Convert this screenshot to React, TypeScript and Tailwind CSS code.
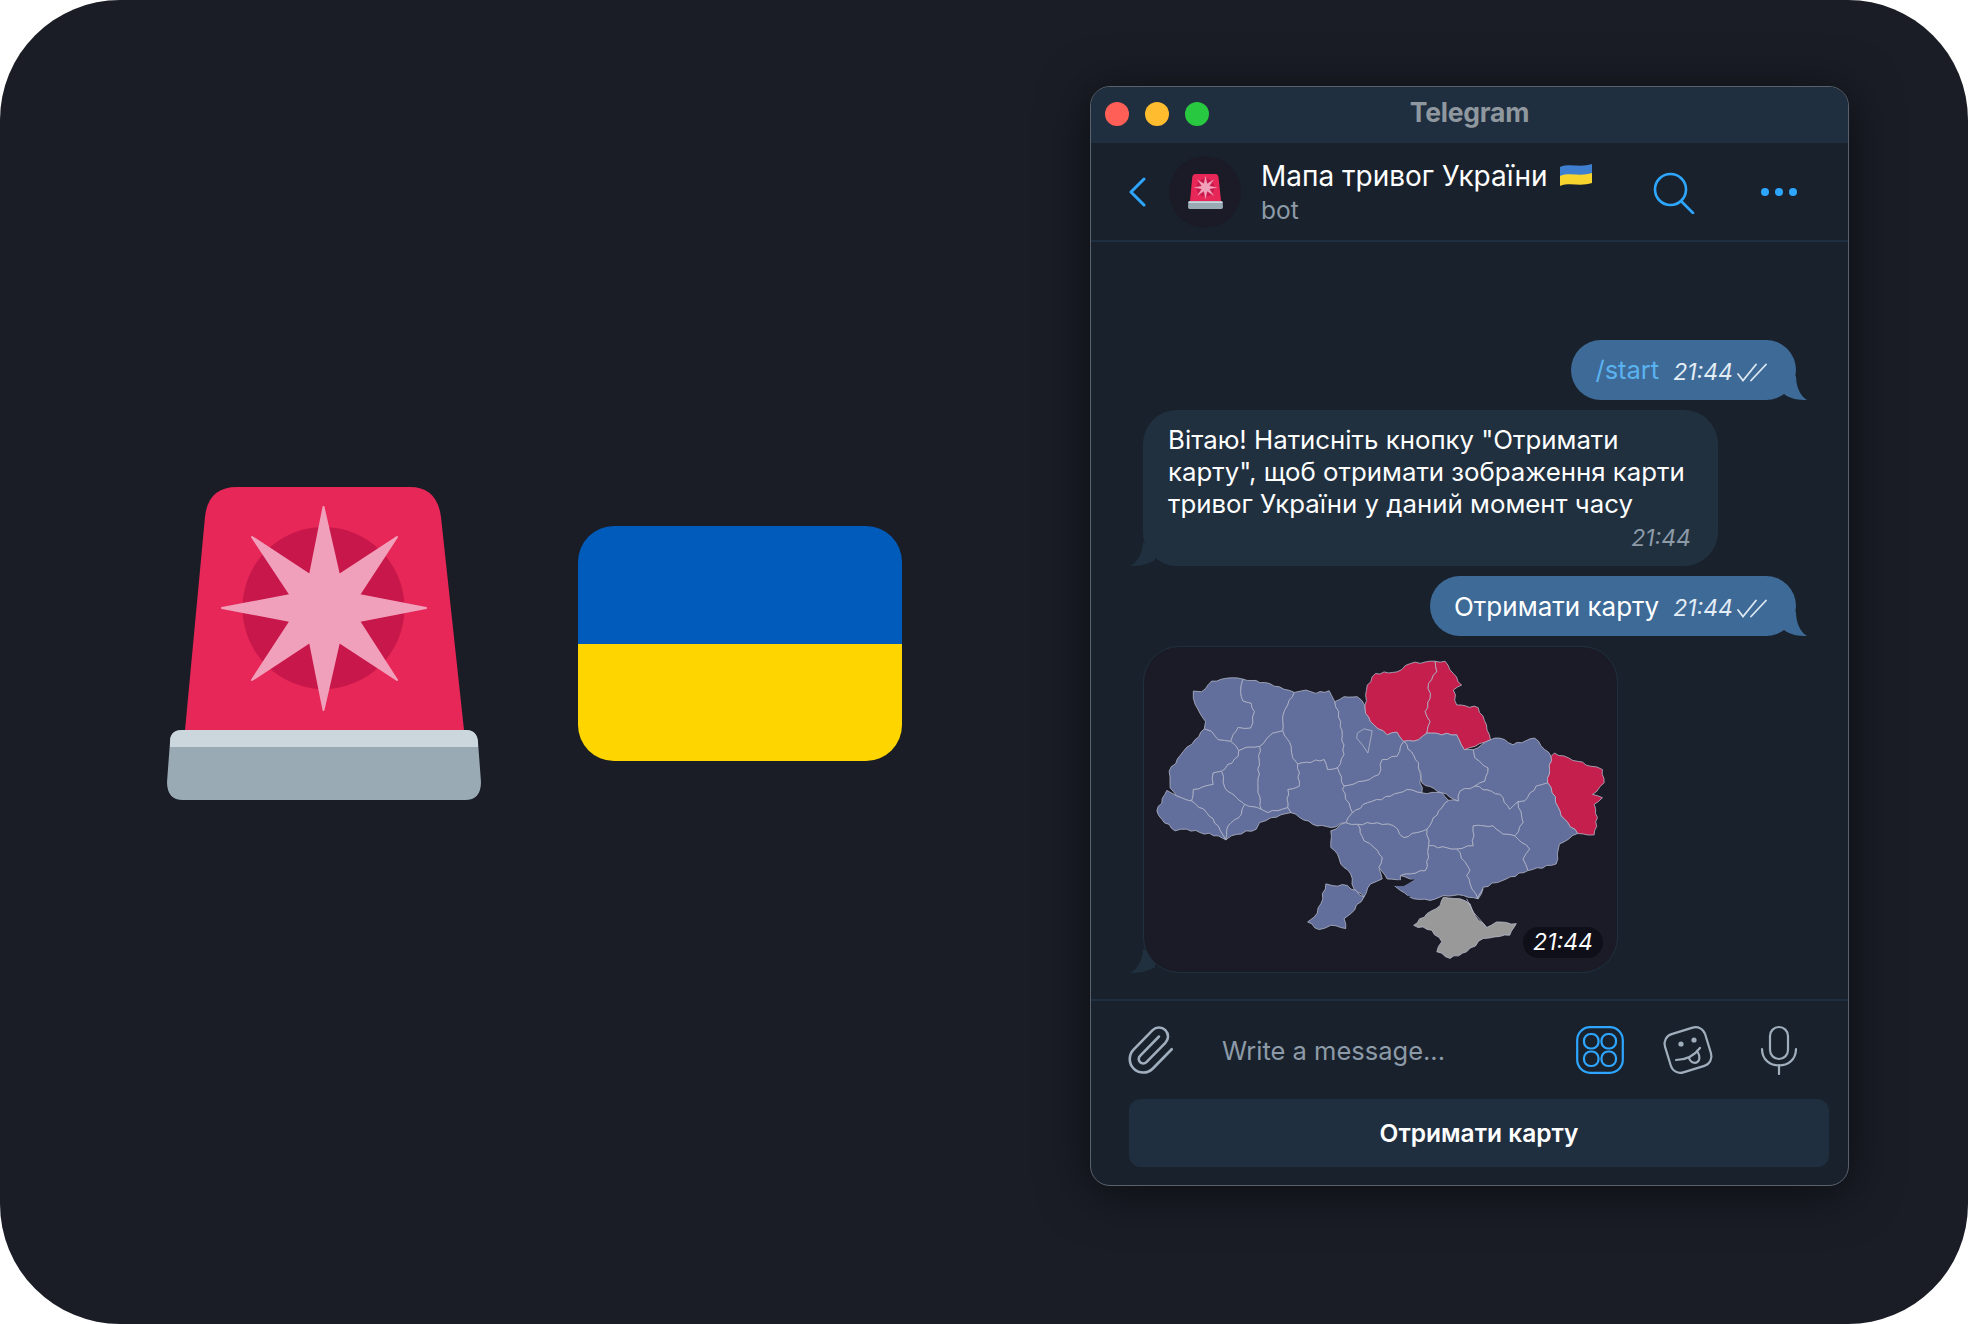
import React from 'react';
import { Paperclip } from 'lucide-react';

type Pt = [number, number];

const BLUE = '#626f9c';
const RED = '#c41f4d';
const GREY = '#999999';

const regions: { fill: string; pts: Pt[] }[] = [
  { fill: BLUE, pts: [[185,148],[210,150],[240,118],[300,108],[335,112],[328,150],[335,178],[360,185],[370,210],[358,260],[320,258],[305,280],[298,300],[260,295],[240,270],[218,262],[222,240],[200,205],[185,170]] },
  { fill: BLUE, pts: [[335,112],[400,122],[445,135],[490,152],[470,190],[455,225],[455,268],[425,275],[385,315],[345,318],[322,328],[298,300],[305,280],[320,258],[358,260],[370,210],[360,185],[335,178],[328,150]] },
  { fill: BLUE, pts: [[490,152],[525,145],[555,155],[595,147],[612,180],[630,240],[640,340],[620,380],[590,385],[580,355],[500,368],[485,350],[480,315],[455,268],[455,225],[470,190]] },
  { fill: BLUE, pts: [[612,180],[640,165],[680,165],[703,192],[705,215],[730,250],[770,280],[800,272],[820,300],[800,345],[755,355],[745,400],[700,420],[640,435],[620,380],[640,340],[630,240]] },
  { fill: RED, pts: [[703,192],[710,130],[735,95],[800,90],[840,65],[915,58],[920,90],[895,125],[900,170],[885,210],[900,240],[890,275],[865,295],[820,300],[800,272],[770,280],[730,250],[705,215]] },
  { fill: RED, pts: [[915,58],[945,58],[970,95],[995,130],[970,145],[980,190],[1045,198],[1070,250],[1082,295],[1035,315],[1003,325],[980,280],[890,275],[900,240],[885,210],[900,170],[895,125],[920,90]] },
  { fill: BLUE, pts: [[820,300],[865,295],[890,275],[980,280],[1003,325],[1030,325],[1035,350],[1075,380],[1065,420],[1035,435],[990,450],[985,480],[935,455],[875,425],[865,365]] },
  { fill: BLUE, pts: [[1030,325],[1082,295],[1110,290],[1150,310],[1215,290],[1265,345],[1255,425],[1220,435],[1185,480],[1165,482],[1140,505],[1110,460],[1035,435],[1065,420],[1075,380],[1035,350]] },
  { fill: RED, pts: [[1275,335],[1345,360],[1385,375],[1420,385],[1425,425],[1390,460],[1420,470],[1395,490],[1405,530],[1395,582],[1345,578],[1295,525],[1265,440],[1255,425],[1265,345]] },
  { fill: BLUE, pts: [[1255,425],[1265,440],[1295,525],[1345,578],[1290,610],[1280,670],[1195,690],[1180,655],[1200,625],[1155,585],[1180,545],[1165,482],[1185,480],[1220,435]] },
  { fill: BLUE, pts: [[990,450],[1035,435],[1110,460],[1140,505],[1165,482],[1180,545],[1155,585],[1120,580],[1090,555],[1030,555],[1030,615],[980,625],[895,615],[890,565],[925,510],[955,478],[985,480]] },
  { fill: BLUE, pts: [[1030,555],[1090,555],[1120,580],[1155,585],[1200,625],[1180,655],[1195,690],[1130,715],[1060,740],[1045,775],[1020,730],[1010,705],[1020,690],[980,625],[1030,615]] },
  { fill: BLUE, pts: [[895,615],[980,625],[1020,690],[1010,705],[1020,730],[1045,775],[1000,765],[940,765],[900,780],[850,775],[810,750],[785,730],[850,720],[810,705],[885,690],[895,650]] },
  { fill: BLUE, pts: [[680,550],[740,545],[790,555],[820,590],[860,575],[890,565],[895,615],[895,650],[885,690],[810,705],[810,720],[770,715],[745,680],[755,650],[730,620],[700,600]] },
  { fill: BLUE, pts: [[645,545],[680,550],[700,600],[730,620],[755,650],[745,680],[755,715],[720,730],[700,770],[670,745],[660,700],[630,670],[620,640],[600,620],[600,570]] },
  { fill: BLUE, pts: [[585,730],[605,735],[650,735],[700,770],[660,820],[640,835],[645,865],[600,855],[565,868],[530,845],[550,830],[570,790]] },
  { fill: BLUE, pts: [[645,545],[665,515],[710,485],[780,465],[830,445],[875,455],[935,455],[955,478],[925,510],[890,565],[860,575],[820,590],[790,555],[740,545],[680,550]] },
  { fill: BLUE, pts: [[640,435],[700,420],[745,400],[755,355],[800,345],[820,300],[865,365],[875,455],[830,445],[780,465],[710,485],[665,515],[635,445]] },
  { fill: BLUE, pts: [[500,368],[580,355],[590,385],[620,380],[640,435],[635,445],[665,515],[645,545],[600,560],[545,550],[480,515],[470,500],[470,445],[505,435]] },
  { fill: BLUE, pts: [[385,315],[425,275],[455,268],[480,315],[485,350],[500,368],[505,435],[470,445],[470,500],[410,515],[390,505],[380,440]] },
  { fill: BLUE, pts: [[322,328],[345,318],[385,315],[380,440],[390,505],[340,490],[320,475],[280,440],[270,390],[320,345]] },
  { fill: BLUE, pts: [[218,262],[240,270],[260,295],[298,300],[322,328],[320,345],[270,390],[245,395],[245,430],[185,445],[180,480],[135,465],[115,440],[112,390],[155,330],[190,295]] },
  { fill: BLUE, pts: [[245,395],[270,390],[280,440],[320,475],[340,490],[330,520],[290,555],[283,597],[260,555],[225,515],[180,480],[185,445],[245,430]] },
  { fill: BLUE, pts: [[105,448],[135,465],[180,480],[225,515],[260,555],[283,597],[260,585],[205,575],[165,565],[130,570],[90,535],[75,510]] },
  { fill: BLUE, pts: [[340,490],[390,505],[410,515],[470,500],[480,515],[420,530],[385,545],[375,565],[300,585],[283,597],[290,555],[330,520]] },
  { fill: GREY, pts: [[940,770],[990,775],[1020,790],[1035,825],[1070,862],[1100,845],[1160,850],[1140,885],[1095,890],[1060,895],[1010,935],[960,955],[920,935],[935,905],[905,870],[850,855],[890,820],[930,795]] },
];

// adds small borderline wiggle; same endpoints give the same wiggle, so shared borders stay shared
const rough = (pts: Pt[]) => {
  const out: string[] = [];
  pts.forEach((p, i) => {
    const q = pts[(i + 1) % pts.length];
    const flip = p[0] > q[0] || (p[0] === q[0] && p[1] > q[1]);
    const [a, b] = flip ? [q, p] : [p, q];
    const len = Math.hypot(b[0] - a[0], b[1] - a[1]);
    const n = Math.max(1, Math.floor(len / 13));
    const seg: string[] = [];
    for (let k = 0; k < n; k++) {
      const t = k / n;
      const h = k === 0 ? 0 : Math.sin((a[0] * 12.9 + b[1] * 78.2 + k * 37.7) * 0.731) * 3;
      const x = a[0] + (b[0] - a[0]) * t - ((b[1] - a[1]) / len) * h;
      const y = a[1] + (b[1] - a[1]) * t + ((b[0] - a[0]) / len) * h;
      seg.push(`${x.toFixed(1)} ${y.toFixed(1)}`);
    }
    if (flip) {
      seg.push(`${b[0]} ${b[1]}`);
      seg.reverse();
      seg.pop();
    }
    out.push(...seg);
  });
  return 'M' + out.join('L') + 'Z';
};

const UkraineMap = () => (
  <svg viewBox="38 15 1424 981" className="block w-full h-full">
    {regions.map((r, i) => (
      <path key={i} d={rough(r.pts)} fill={r.fill} stroke="#b4b8ca" strokeWidth={2.4} strokeLinejoin="round" />
    ))}
    <path d="M680 275 L700 262 L725 268 L712 335 L695 310 L678 290Z" fill={BLUE} stroke="#b4b8ca" strokeWidth={2.4} />
    <path d="M775 725 L810 720 L850 718 L820 735 L790 735Z M780 750 L810 760 L840 770" fill="#1a1b26" stroke="#1a1b26" strokeWidth={3} />
    <path d="M1010 775 L1030 815 L1070 860" fill="none" stroke="#b4b8ca" strokeWidth={2.4} />
    <path d="M1040 775 L1060 745" fill="none" stroke="#b4b8ca" strokeWidth={3} />
  </svg>
);

const Siren: React.FC<{ className?: string }> = ({ className }) => (
  <svg viewBox="0 0 314 313" className={className}>
    <path d="M18 243 L38 30 Q41 0 70 0 H243 Q270 0 274 30 L297 243 Z" fill="#e62757" />
    <circle cx="156.5" cy="121" r="81" fill="#c8174a" />
    <polygon
      points="156.5,20 172,88 230,50 192,108 259,121 192,134 230,193 172,155 156.5,223 143,155 85,193 123.5,134 55,121 123.5,108 85,50 143,88"
      fill="#f1a0bb"
      stroke="#f1a0bb"
      strokeWidth={2}
      strokeLinejoin="round"
    />
    <path d="M3 255 Q3 243 15 243 H299 Q310 243 311 255 L314 295 Q314 313 298 313 H16 Q0 313 0 295 Z" fill="#99aab5" />
    <path d="M3 260 V255 Q3 243 15 243 H299 Q310 243 311 255 V260 Z" fill="#ccd6dd" />
  </svg>
);

const Checks = () => (
  <svg viewBox="0 0 30 19" className="w-[30px] h-[19px]" fill="none" stroke="#dce7f1" strokeWidth={1.8} strokeLinecap="round">
    <path d="M1 11 L6 17.5 L19 1.5" />
    <path d="M14 17.5 L29 1.5" />
  </svg>
);

const OutTail = () => (
  <svg viewBox="0 0 28 24" className="absolute right-[-11px] bottom-0 w-[28px] h-[24px]">
    <path d="M17 0 C17 10 21 20 28 24 C20 24 11 23 5 18 L5 5Z" fill="#3e6a97" />
  </svg>
);

const InTail = () => (
  <svg viewBox="0 0 28 24" className="absolute left-[-13px] bottom-0 w-[28px] h-[24px]">
    <path d="M13 0 C13 10 8 20 0 24 C8 24 17 23 25 18 L25 5Z" fill="#20303f" />
  </svg>
);

const OutBubble: React.FC<{ children: React.ReactNode }> = ({ children }) => (
  <div className="relative self-end h-[60px] rounded-[30px] bg-[#3e6a97] pl-[24px] pr-[29px] flex items-center">
    {children}
    <span className="ml-[14px] mt-[4px] text-[23px] italic text-[#e3edf6]">21:44</span>
    <span className="ml-[4px] mt-[4px]">
      <Checks />
    </span>
    <OutTail />
  </div>
);

const IconBtn = () => (
  <svg viewBox="0 0 48 48" className="w-[48px] h-[48px]" fill="none" stroke="#2ea6ff" strokeWidth={2.2}>
    <rect x="1.2" y="1.2" width="45.6" height="45.6" rx="13" />
    <rect x="8" y="8" width="14.5" height="14.5" rx="6.5" />
    <rect x="25.5" y="8" width="14.5" height="14.5" rx="6.5" />
    <rect x="8" y="25.5" width="14.5" height="14.5" rx="6.5" />
    <rect x="25.5" y="25.5" width="14.5" height="14.5" rx="6.5" />
  </svg>
);

const StickerIcon = () => (
  <svg viewBox="0 0 54 52" className="w-[54px] h-[52px]" fill="none" stroke="#a0aebd" strokeWidth={2.2} strokeLinecap="round">
    <rect x="6" y="6" width="42" height="40" rx="10" transform="rotate(-17 27 26)" />
    <circle cx="20" cy="20" r="2.6" fill="#a0aebd" stroke="none" />
    <circle cx="33" cy="16" r="2.6" fill="#a0aebd" stroke="none" />
    <path d="M15 36 C24 36 33 32 39 24" />
    <path d="M28 34 C30 40 36 40 38 36 C39 33 38 30 36 27" />
  </svg>
);

const MicIcon = () => (
  <svg viewBox="0 0 38 50" className="w-[38px] h-[50px]" fill="none" stroke="#a0aebd" strokeWidth={2.2} strokeLinecap="round">
    <rect x="10" y="2" width="18" height="32" rx="9" />
    <path d="M2 24 C2 46 36 46 36 24" />
    <path d="M19 40 V49" />
  </svg>
);

export default function App() {
  return (
    <div className="w-[1968px] h-[1324px] bg-white font-['Inter','Noto_Sans',sans-serif]">
      <div className="w-full h-full rounded-[120px] bg-[#1a1d26] flex items-start pl-[167px] pt-[86px] overflow-hidden">
        <Siren className="w-[314px] h-[313px] mt-[401px] shrink-0" />

        <div className="w-[324px] h-[235px] ml-[97px] mt-[440px] shrink-0 rounded-[36px] overflow-hidden flex flex-col">
          <div className="flex-1 bg-[#005bbb]" />
          <div className="flex-1 bg-[#ffd500]" />
        </div>

        <div className="w-[759px] h-[1100px] ml-[188px] shrink-0 rounded-[20px] bg-[#19222c] border border-[#59626c] shadow-[0_6px_50px_rgba(0,0,0,0.55)] overflow-hidden flex flex-col">
          <div className="relative h-[56px] shrink-0 bg-[#202f3f] flex items-center justify-center">
            <div className="absolute left-[14px] top-[15px] flex gap-[16px]">
              <span className="w-[24px] h-[24px] rounded-full bg-[#ff5f57]" />
              <span className="w-[24px] h-[24px] rounded-full bg-[#febc2e]" />
              <span className="w-[24px] h-[24px] rounded-full bg-[#28c840]" />
            </div>
            <span className="text-[26.5px] font-bold text-[#8f979f] mb-[4px] tracking-[-0.2px]">Telegram</span>
          </div>

          <div className="h-[99px] shrink-0 border-b-2 border-[#202f3f] flex items-center pl-[38px]">
            <svg viewBox="0 0 17 30" className="w-[17px] h-[30px]" fill="none" stroke="#2ea6ff" strokeWidth={3} strokeLinecap="round" strokeLinejoin="round">
              <path d="M15 2 L2 15 L15 28" />
            </svg>
            <div className="ml-[23px] w-[72px] h-[72px] rounded-full bg-[#1a1b26] flex items-center justify-center">
              <Siren className="w-[35px] h-[35px]" />
            </div>
            <div className="ml-[20px] w-[382px]">
              <div className="flex items-center h-[36px] mb-[1px] -mt-[1px]">
                <span className="text-[28px] text-white">Мапа тривог України</span>
                <svg viewBox="0 0 32 24" className="w-[32px] h-[24px] ml-[12px] mb-[2px]">
                  <path d="M0 4 C10 0 20 5 32 1 V12 C20 16 10 11 0 15Z" fill="#3f7fd0" />
                  <path d="M0 13 C10 9 20 14 32 10 V20 C20 24 10 19 0 23Z" fill="#f7d52e" />
                </svg>
              </div>
              <div className="text-[24.5px] leading-[30px] text-[#8d9aa8]">bot</div>
            </div>
            <svg viewBox="0 0 42 42" className="w-[42px] h-[42px] ml-[10px] mt-[2px]" fill="none" stroke="#2ea6ff" strokeWidth={2.6} strokeLinecap="round">
              <circle cx="17.5" cy="17.5" r="15.5" />
              <path d="M28 29 L40 41" />
            </svg>
            <div className="ml-[66px] flex gap-[6px]">
              <span className="w-[8px] h-[8px] rounded-full bg-[#2ea6ff]" />
              <span className="w-[8px] h-[8px] rounded-full bg-[#2ea6ff]" />
              <span className="w-[8px] h-[8px] rounded-full bg-[#2ea6ff]" />
            </div>
          </div>

          <div className="flex-1 flex flex-col gap-[10px] pt-[98px] pl-[52px] pr-[52px]">
            <OutBubble>
              <span className="text-[25.5px] text-[#5ab3f0]">/start</span>
            </OutBubble>

            <div className="relative self-start w-[575px] h-[156px] rounded-[34px] bg-[#20303f] pl-[25px] pt-[14px]">
              <div className="text-[25.8px] leading-[32px] text-white whitespace-nowrap">
                Вітаю! Натисніть кнопку "Отримати
                <br />
                карту", щоб отримати зображення карти
                <br />
                тривог України у даний момент часу
              </div>
              <div className="absolute right-[27px] bottom-[11px] text-[23px] italic text-[#8d9aa8]">21:44</div>
              <InTail />
            </div>

            <OutBubble>
              <span className="text-[26px] text-white">Отримати карту</span>
            </OutBubble>

            <div className="relative self-start w-[475px] h-[327px]">
              <InTail />
              <div className="relative w-full h-full rounded-[36px] bg-[#1a1b26] border border-[#20303f] overflow-hidden">
                <UkraineMap />
              </div>
              <div className="absolute left-[380px] top-[281px] w-[80px] h-[31px] rounded-full bg-[#0f0f1a] flex items-center justify-center text-[23px] italic text-white">
                21:44
              </div>
            </div>
          </div>

          <div className="h-[186px] shrink-0 border-t-2 border-[#202f3f] flex flex-col pl-[38px] pr-[19px]">
            <div className="h-[98px] flex items-center">
              <Paperclip className="w-[54px] h-[54px] -ml-[6px] text-[#a0aebd]" strokeWidth={1.15} />
              <span className="ml-[45px] mt-[3px] w-[354px] text-[25.5px] text-[#8d9aa8]">Write a message...</span>
              <IconBtn />
              <span className="ml-[37px]">
                <StickerIcon />
              </span>
              <span className="ml-[45px]">
                <MicIcon />
              </span>
            </div>
            <div className="h-[68px] rounded-[12px] bg-[#202f3f] flex items-center justify-center text-[24.5px] font-semibold text-white">
              Отримати карту
            </div>
          </div>
        </div>
      </div>
    </div>
  );
}
